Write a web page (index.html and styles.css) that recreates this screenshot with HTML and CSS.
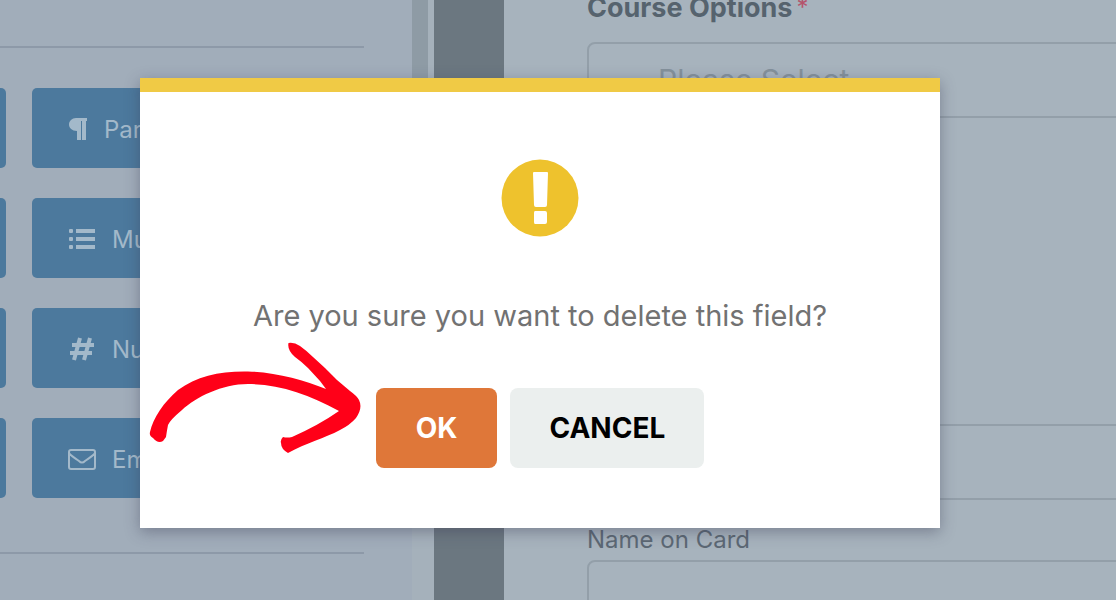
FILE: index.html
```
<!DOCTYPE html>
<html lang="en">
<head>
    <meta charset="UTF-8">
    <meta name="viewport" content="width=device-width, initial-scale=1.0">
    <title>Form Builder</title>
    <link rel="stylesheet" href="styles.css">
</head>
<body>
    <div class="builder">
        <aside class="sidebar">
            <div class="field-panel">
                <div class="field-grid">
                    <button class="field-button" aria-label="Single Line Text"></button>
                    <button class="field-button">
                        <svg class="field-icon narrow" viewBox="0 0 20 24"><path d="M8 1h11v3h-1v19h-4V4h-1v19H9v-9C4 14 1 11 1 7.500S4 1 8 1z"/></svg>
                        Paragraph Text
                    </button>
                    <button class="field-button" aria-label="Dropdown"></button>
                    <button class="field-button">
                        <svg class="field-icon" viewBox="0 0 28 24"><path d="M2 2h2q1 0 1 1v2q0 1-1 1H2q-1 0-1-1V3q0-1 1-1zM2 10h2q1 0 1 1v2q0 1-1 1H2q-1 0-1-1v-2q0-1 1-1zM2 18h2q1 0 1 1v2q0 1-1 1H2q-1 0-1-1v-2q0-1 1-1zM8 2h19v4H8zM8 10h19v4H8zM8 18h19v4H8z"/></svg>
                        Multiple Choice
                    </button>
                    <button class="field-button" aria-label="Checkboxes"></button>
                    <button class="field-button">
                        <svg class="field-icon" viewBox="0 0 28 24"><path class="stroke-wide" d="M12 1L6 23M22 1l-6 22M4 8h22M2 16h22"/></svg>
                        Numbers
                    </button>
                    <button class="field-button" aria-label="Name"></button>
                    <button class="field-button">
                        <svg class="field-icon" viewBox="0 0 28 24"><path class="stroke-thin" d="M3 3h22q2 0 2 2v15q0 2-2 2H3q-2 0-2-2V5q0-2 2-2zM1 6q1 2 10 8 3 3 6 0 9-6 10-8"/></svg>
                        Email
                    </button>
                </div>
            </div>
            <div class="scrollbar"><div class="scroll-thumb"></div></div>
        </aside>

        <main class="preview">
            <div class="form-field">
                <label class="field-title" for="course">Course Options<span class="required">*</span></label>
                <select class="form-control" id="course">
                    <option>Please Select</option>
                </select>
            </div>
            <div class="form-field card-field">
                <input class="form-control" id="card-number" type="text" aria-label="Card number">
            </div>
            <div class="form-field">
                <label class="sub-label" for="card-name">Name on Card</label>
                <input class="form-control" id="card-name" type="text">
            </div>
        </main>
    </div>

    <div class="overlay">
        <div class="dialog" role="alertdialog" aria-labelledby="message">
            <svg class="alert-icon" viewBox="0 0 78 78">
                <circle cx="39" cy="39" r="38.500"/>
                <path d="M33 13h13q1 0 1 1l-1 32q0 2-2 2h-9q-2 0-2-2l-1-32q0-1 1-1zM34 52h10q2 0 2 2v9q0 2-2 2H34q-1 0-1-2v-9q0-2 1-2z"/>
            </svg>
            <p class="message" id="message">Are you sure you want to delete this field?</p>
            <div class="dialog-buttons">
                <button class="ok-button">OK</button>
                <button class="cancel-button">CANCEL</button>
            </div>
            <svg class="arrow" viewBox="148 342 214 112">
                <path d="M150 432C153 418 164 402 178 390C197 376 220 371 248 371.500C275 372 304 380 326 389L320 381L308 368Q302 362 295 357Q287 350 288.500 343Q294 342 300 346Q307 351 313 357L325 368L337 380L350 391Q357 396 359 400Q363 408 356 418Q350 425 340 430C325 438 306 443 288 453Q281 449 281 443Q280 440 283 437Q287 438 292 437Q319 425 339 411C309 394 278 384 248 384C222 384 196 397 182 410Q170 420 168 425Q167 430 166 437L163 441Q158 444 153 438Q149 436 150 432z"/>
            </svg>
        </div>
    </div>
</body>
</html>
```
FILE: styles.css
```
* {
    box-sizing: border-box;
}

body {
    margin: 0;
    height: 100vh;
    overflow: hidden;
    font-family: Inter, "Liberation Sans", sans-serif;
    font-size: 24px;
}

button, input, select {
    font: inherit;
}

/* Builder behind the dialog */
.builder {
    display: flex;
    height: 100vh;
    background-color: #6b7780;
}

.sidebar {
    display: flex;
    justify-content: flex-end;
    flex: 0 0 434px;
    margin-right: 70px;
    overflow: hidden;
    background-color: #a1adba;
}

.field-panel {
    flex: none;
    padding: 46px 48px 0 0;
}

.field-grid {
    display: grid;
    grid-template-columns: 332px 332px;
    grid-auto-rows: 80px;
    gap: 30px 26px;
    padding: 40px 0 54px;
    border-top: 2px solid #8d99a8;
    border-bottom: 2px solid #8d99a8;
}

.field-button {
    display: flex;
    align-items: center;
    gap: 16px;
    padding: 2px 36px 0;
    border: none;
    border-radius: 5px;
    background-color: #4c799d;
    color: #a3b9ca;
    white-space: nowrap;
    cursor: pointer;
}

.field-icon {
    width: 28px;
    height: 24px;
    fill: #a3b9ca;
}

.field-icon.narrow {
    width: 20px;
}

.stroke-wide, .stroke-thin {
    fill: none;
    stroke: #a3b9ca;
    stroke-width: 4;
}

.stroke-thin {
    stroke-width: 2;
}

.scrollbar {
    flex: 0 0 22px;
    background-color: #a5b1bb;
}

.scroll-thumb {
    width: 16px;
    height: 300px;
    background-color: #8e9ba5;
}

/* Form preview */
.preview {
    flex: 1;
    min-width: 0;
    padding-left: 83px;
    overflow: hidden;
    background-color: #a7b3bd;
}

.form-field {
    display: flex;
    flex-direction: column;
    margin-right: -20px;
}

.field-title {
    display: flex;
    height: 42px;
    line-height: 16px;
    font-size: 27px;
    font-weight: 700;
    color: #56636e;
}

.required {
    margin-left: 4px;
    font-size: 24px;
    font-weight: 400;
    color: #b5546c;
}

.form-control {
    width: 100%;
    height: 76px;
    padding: 0 69px;
    border: 2px solid #939fa9;
    border-radius: 8px;
    background-color: transparent;
    color: #84919b;
    font-size: 30px;
    appearance: none;
}

.card-field {
    margin-top: 306px;
}

.sub-label {
    padding: 24px 0 4px;
    line-height: 32px;
    color: #5c6874;
}

/* Confirmation dialog */
.overlay {
    position: absolute;
    inset: 0;
    padding: 78px 176px 72px 140px;
}

.dialog {
    position: relative;
    display: flex;
    flex-direction: column;
    align-items: center;
    padding: 67px 0 60px;
    border-top: 14px solid #f0ca45;
    background-color: #ffffff;
    box-shadow: 0 4px 14px rgba(55, 55, 80, 0.4);
}

.alert-icon {
    width: 78px;
    height: 78px;
    fill: #eec22d;
}

.alert-icon path {
    fill: #ffffff;
}

.message {
    margin: 58px 0 52px;
    line-height: 41px;
    font-size: 29px;
    color: #727272;
}

.dialog-buttons {
    display: flex;
    gap: 13px;
}

.ok-button, .cancel-button {
    height: 80px;
    padding: 0 39px;
    border: none;
    border-radius: 8px;
    font-size: 28px;
    font-weight: 700;
    cursor: pointer;
}

.ok-button {
    padding: 0 40px;
    background-color: #df7739;
    color: #ffffff;
}

.cancel-button {
    background-color: #ebefee;
    color: #000000;
}

/* Arrow pointing at the OK button */
.arrow {
    position: absolute;
    top: 250px;
    left: 8px;
    width: 214px;
    height: 112px;
    fill: #ff0018;
}
```
